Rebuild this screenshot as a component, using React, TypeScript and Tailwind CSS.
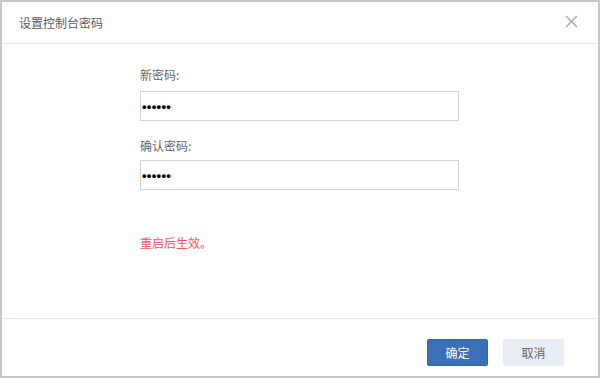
export default function App() {
  const font = { fontFamily: '"Noto Sans CJK SC", "Liberation Sans", sans-serif' };
  return (
    <div style={font} className="w-[600px] h-[378px] bg-white border-2 border-[#c8c8c8] flex flex-col">
      <div className="h-[42px] flex items-center justify-between pl-[17px] pr-[20px] border-b border-[#e6eaef] shrink-0">
        <span className="text-[12px] text-[#5a5a5a]">设置控制台密码</span>
        <svg width="13" height="13" viewBox="0 0 13 13" className="mt-[-2px]">
          <path d="M1 1 L12 12 M12 1 L1 12" stroke="#9aa6b8" strokeWidth="1.3" />
        </svg>
      </div>
      <div className="flex-1 pl-[138px] pt-[23px]">
        <div className="text-[12px] leading-4 text-[#666]">新密码:</div>
        <div className="mt-[8px] w-[319px] h-[30px] border border-[#d3d3d3] flex items-center pl-[1px]">
          <span className="font-['Liberation_Sans'] font-bold text-[13px] leading-none tracking-[0.3px] text-black">••••••</span>
        </div>
        <div className="mt-[17px] text-[12px] leading-4 text-[#666]">确认密码:</div>
        <div className="mt-[6px] w-[319px] h-[30px] border border-[#d3d3d3] flex items-center pl-[1px]">
          <span className="font-['Liberation_Sans'] font-bold text-[13px] leading-none tracking-[0.3px] text-black">••••••</span>
        </div>
        <div className="mt-[45px] text-[12px] leading-4 text-[#f25555]">重启后生效。</div>
      </div>
      <div className="h-[58px] border-t border-[#e6eaef] flex justify-end items-start pt-[20px] pr-[34px] gap-[15px] shrink-0">
        <button className="w-[61px] h-[27px] rounded-[2px] bg-[#3b6fb6] border border-[#3565a8] text-white text-[12px]">确定</button>
        <button className="w-[61px] h-[27px] rounded-[2px] bg-[#e8eef4] text-[#666] text-[12px]">取消</button>
      </div>
    </div>
  );
}
